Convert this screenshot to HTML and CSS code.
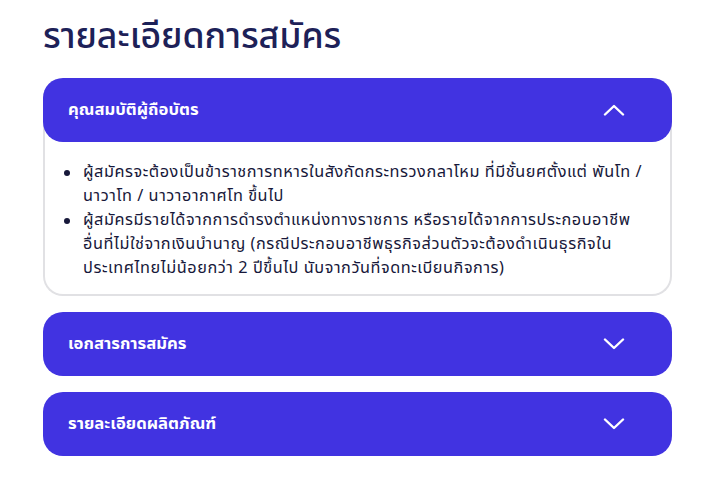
FILE: index.html
```html
<!DOCTYPE html>
<html lang="th">
<head>
<meta charset="utf-8">
<link rel="stylesheet" href="styles.css">
</head>
<body>
<main class="page">
  <h1 class="title">รายละเอียดการสมัคร</h1>
  <div class="accordion">
    <section class="item open">
      <div class="head">
        <span class="head-text">คุณสมบัติผู้ถือบัตร</span>
        <svg class="chev" width="22" height="12" viewBox="0 0 22 12"><path d="M2 10.5 L11 2 L20 10.5" fill="none" stroke="#fff" stroke-width="2.4" stroke-linecap="round" stroke-linejoin="round"/></svg>
      </div>
      <div class="body">
        <ul class="list">
          <li><span>ผู้สมัครจะต้องเป็นข้าราชการทหารในสังกัดกระทรวงกลาโหม ที่มีชั้นยศตั้งแต่ พันโท /<br>นาวาโท / นาวาอากาศโท ขึ้นไป</span></li>
          <li><span>ผู้สมัครมีรายได้จากการดำรงตำแหน่งทางราชการ หรือรายได้จากการประกอบอาชีพ<br>อื่นที่ไม่ใช่จากเงินบำนาญ (กรณีประกอบอาชีพธุรกิจส่วนตัวจะต้องดำเนินธุรกิจใน<br>ประเทศไทยไม่น้อยกว่า 2 ปีขึ้นไป นับจากวันที่จดทะเบียนกิจการ)</span></li>
        </ul>
      </div>
    </section>
    <section class="item">
      <div class="head">
        <span class="head-text">เอกสารการสมัคร</span>
        <svg class="chev" width="22" height="12" viewBox="0 0 22 12"><path d="M2 1.5 L11 10 L20 1.5" fill="none" stroke="#fff" stroke-width="2.4" stroke-linecap="round" stroke-linejoin="round"/></svg>
      </div>
    </section>
    <section class="item">
      <div class="head">
        <span class="head-text">รายละเอียดผลิตภัณฑ์</span>
        <svg class="chev" width="22" height="12" viewBox="0 0 22 12"><path d="M2 1.5 L11 10 L20 1.5" fill="none" stroke="#fff" stroke-width="2.4" stroke-linecap="round" stroke-linejoin="round"/></svg>
      </div>
    </section>
  </div>
</main>
</body>
</html>
```
FILE: styles.css
```css
* { box-sizing: border-box; }
html, body { margin: 0; padding: 0; background: #fff; }
body {
  font-family: "Noto Sans Thai", "Noto Sans", "DejaVu Sans", sans-serif;
  color: #1b1c3d;
}
.page {
  padding: 12px 32px 0 43px;
  width: 704px;
}
.title {
  margin: 0 0 16px 0;
  font-size: 35.6px;
  line-height: 50px;
  font-weight: 500;
  color: #1d2158;
}
.accordion {
  display: flex;
  flex-direction: column;
  gap: 16px;
  width: 629px;
}
.item {
  border-radius: 20px;
}
.item.open {
  border: 2px solid #e1e1e4;
  border-top: none;
}
.head {
  background: #4133e1;
  height: 64px;
  border-radius: 20px;
  display: flex;
  align-items: center;
  justify-content: space-between;
  padding: 0 47px 0 25px;
  color: #fff;
}
.item.open .head { margin: 0 -2px; }
.head-text {
  font-size: 16.7px;
  font-weight: 700;
}
.chev { display: block; }
.body {
  padding: 18px 8px 14px 19px;
}
.list {
  margin: 0;
  padding: 0;
  list-style: none;
  font-size: 16.3px;
  line-height: 24px;
  letter-spacing: 0.55px;
  color: #17183a;
}
.list li {
  display: flex;
  gap: 13px;
}
.list li::before {
  content: "";
  flex: none;
  width: 6px;
  height: 6px;
  border-radius: 50%;
  background: #17183a;
  margin-top: 10px;
}
```
